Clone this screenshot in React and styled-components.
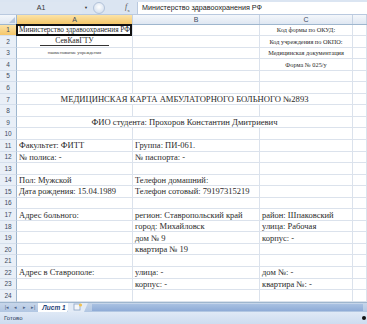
import React from "react";
import styled, { createGlobalStyle } from "styled-components";

const GlobalStyle = createGlobalStyle`
  html, body {
    margin: 0;
    padding: 0;
    background: #ffffff;
  }
`;

const COLS = [116, 127, 93, 14];
const ROW_H = 11.55;

const rows = [
  { n: 1, active: true, cells: [{ t: "Министерство здравоохранения РФ", kind: "selected" }, null, { t: "Код формы по ОКУД:", kind: "small" }] },
  { n: 2, cells: [{ t: "СевКавГТУ", kind: "org" }, null, { t: "Код учреждения по ОКПО:", kind: "small" }] },
  { n: 3, cells: [{ t: "наименование учреждения", kind: "tiny" }, null, { t: "Медицинская документация", kind: "small" }] },
  { n: 4, cells: [null, null, { t: "Форма № 025/у", kind: "small" }] },
  { n: 5, cells: [] },
  { n: 6, cells: [] },
  { n: 7, span: "МЕДИЦИНСКАЯ КАРТА АМБУЛАТОРНОГО БОЛЬНОГО №2893" },
  { n: 8, cells: [] },
  { n: 9, span: "ФИО студента: Прохоров Константин Дмитриевич" },
  { n: 10, cells: [] },
  { n: 11, cells: [{ t: "Факультет: ФИТТ" }, { t: "Группа: ПИ-061." }] },
  { n: 12, cells: [{ t: "№ полиса: -" }, { t: "№ паспорта: -" }] },
  { n: 13, cells: [] },
  { n: 14, cells: [{ t: "Пол: Мужской" }, { t: "Телефон домашний:" }] },
  { n: 15, cells: [{ t: "Дата рождения: 15.04.1989" }, { t: "Телефон сотовый: 79197315219" }] },
  { n: 16, cells: [] },
  { n: 17, cells: [{ t: "Адрес больного:" }, { t: "регион: Ставропольский край" }, { t: "район: Шпаковский" }] },
  { n: 18, cells: [null, { t: "город: Михайловск" }, { t: "улица: Рабочая" }] },
  { n: 19, cells: [null, { t: "дом № 9" }, { t: "корпус: -" }] },
  { n: 20, cells: [null, { t: "квартира № 19" }] },
  { n: 21, cells: [] },
  { n: 22, cells: [{ t: "Адрес в Ставрополе:" }, { t: "улица: -" }, { t: "дом №: -" }] },
  { n: 23, cells: [null, { t: "корпус: -" }, { t: "квартира №: -" }] },
  { n: 24, cells: [] },
];

const App = () => (
  <Window>
    <GlobalStyle />
    <FormulaBar>
      <NameBox>A1</NameBox>
      <DropArrow>▼</DropArrow>
      <Splitter />
      <RoundBtn />
      <Fx>
        <i>f</i>
        <sub>x</sub>
      </Fx>
      <FormulaInput>Министерство здравоохранения РФ</FormulaInput>
    </FormulaBar>

    <HeaderRow>
      <Corner>
        <svg width="8" height="8" viewBox="0 0 8 8">
          <path d="M7 1 L7 7 L1 7 Z" fill="#b7c6dc" />
        </svg>
      </Corner>
      {["A", "B", "C", ""].map((c, i) => (
        <ColHead key={i} $w={COLS[i]} $active={c === "A"}>
          {c}
        </ColHead>
      ))}
    </HeaderRow>

    <Sheet>
      {rows.map((r) => (
        <Row key={r.n}>
          <RowHead $active={r.active}>{r.n}</RowHead>
          {r.span ? (
            <>
              <SpanCell $w={COLS[0] + COLS[1] + COLS[2]}>{r.span}</SpanCell>
              <Cell $w={COLS[3]} />
            </>
          ) : (
            COLS.map((w, i) => {
              const c = r.cells[i];
              if (!c) return <Cell key={i} $w={w} />;
              if (c.kind === "selected")
                return (
                  <Cell key={i} $w={w}>
                    <Selected>{c.t}</Selected>
                  </Cell>
                );
              if (c.kind === "org")
                return (
                  <CenterCell key={i} $w={w}>
                    <OrgName>{c.t}</OrgName>
                  </CenterCell>
                );
              if (c.kind === "tiny")
                return (
                  <CenterCell key={i} $w={w}>
                    <Tiny>{c.t}</Tiny>
                  </CenterCell>
                );
              if (c.kind === "small")
                return (
                  <CenterCell key={i} $w={w}>
                    <Small>{c.t}</Small>
                  </CenterCell>
                );
              return (
                <Cell key={i} $w={w}>
                  <Text>{c.t}</Text>
                </Cell>
              );
            })
          )}
        </Row>
      ))}
    </Sheet>

    <TabBar>
      <NavButtons>
        <span>|◂</span>
        <span>◂</span>
        <span>▸</span>
        <span>▸|</span>
      </NavButtons>
      <SheetTab>Лист 1</SheetTab>
      <NewTab>
        <svg width="10" height="8" viewBox="0 0 10 8">
          <rect x="1" y="1" width="6" height="6" fill="#f3f6fb" stroke="#8aa2c4" strokeWidth="0.8" />
          <circle cx="7.5" cy="2" r="1.6" fill="#f2c14e" />
        </svg>
      </NewTab>
      <HScroll />
    </TabBar>

    <StatusBar>
      <span>Готово</span>
      <Dot />
    </StatusBar>
  </Window>
);

export default App;

const Window = styled.div`
  width: 367px;
  height: 324px;
  overflow: hidden;
  display: flex;
  flex-direction: column;
  background: #ffffff;
  font-family: "Liberation Sans", Arial, sans-serif;
`;

const FormulaBar = styled.div`
  height: 15px;
  flex: none;
  display: flex;
  align-items: center;
  background: #dbe5f2;
  border-bottom: 1px solid #b9c9df;
  box-sizing: border-box;
  padding-top: 1px;
`;

const NameBox = styled.div`
  width: 82px;
  height: 12px;
  background: #dde6f2;
  display: flex;
  align-items: center;
  justify-content: center;
  font-size: 7px;
  color: #333;
`;

const DropArrow = styled.div`
  width: 8px;
  font-size: 4px;
  color: #333;
  text-align: center;
`;

const Splitter = styled.div`
  width: 3px;
`;

const RoundBtn = styled.div`
  width: 12px;
  height: 12px;
  border-radius: 50%;
  background: radial-gradient(circle at 50% 40%, #ffffff, #c9d7ea);
  border: 1px solid #b3c3da;
  box-sizing: border-box;
  margin-right: 20px;
`;

const Fx = styled.div`
  width: 12px;
  font-family: "Liberation Serif", serif;
  font-size: 8px;
  color: #555;
  sub {
    font-size: 5px;
  }
`;

const FormulaInput = styled.div`
  flex: 1;
  height: 12px;
  background: #ffffff;
  border-left: 1px solid #b9c9df;
  display: flex;
  align-items: center;
  padding-left: 4px;
  font-size: 7.2px;
  color: #222;
  white-space: nowrap;
`;

const HeaderRow = styled.div`
  height: 9.5px;
  flex: none;
  display: flex;
  background: linear-gradient(#f4f7fb, #dfe7f2);
  border-bottom: 1px solid #9eb6ce;
  box-sizing: border-box;
`;

const Corner = styled.div`
  width: 17px;
  flex: none;
  display: flex;
  align-items: flex-end;
  justify-content: flex-end;
  border-right: 1px solid #9eb6ce;
  box-sizing: border-box;
  svg {
    display: block;
  }
`;

const ColHead = styled.div`
  width: ${(p) => p.$w}px;
  flex: none;
  box-sizing: border-box;
  border-right: 1px solid #c5d2e3;
  display: flex;
  align-items: center;
  justify-content: center;
  font-size: 7px;
  color: #3c4a60;
  background: ${(p) =>
    p.$active ? "linear-gradient(#fbe3a8, #f5c76a)" : "transparent"};
`;

const Sheet = styled.div`
  flex: none;
  display: flex;
  flex-direction: column;
`;

const Row = styled.div`
  height: ${ROW_H}px;
  display: flex;
  box-sizing: border-box;
`;

const RowHead = styled.div`
  width: 17px;
  flex: none;
  box-sizing: border-box;
  border-right: 1px solid #9eb6ce;
  border-bottom: 1px solid #d5dfec;
  display: flex;
  align-items: center;
  justify-content: center;
  font-size: 6.5px;
  color: #3c4a60;
  background: ${(p) =>
    p.$active ? "linear-gradient(#fbe3a8, #f5c76a)" : "#e9eff7"};
`;

const Cell = styled.div`
  width: ${(p) => p.$w}px;
  flex: none;
  box-sizing: border-box;
  border-right: 1px solid #dbe2ec;
  border-bottom: 1px solid #dbe2ec;
  position: relative;
  display: flex;
  align-items: center;
  overflow: visible;
  white-space: nowrap;
  font-family: "Liberation Serif", "Times New Roman", serif;
  font-size: 8.5px;
  color: #2a2a2a;
`;

const CenterCell = styled(Cell)`
  justify-content: center;
`;

const SpanCell = styled(Cell)`
  justify-content: center;
  font-size: 8.6px;
`;

const Text = styled.span`
  padding-left: 2px;
`;

const Selected = styled.div`
  position: absolute;
  left: -1px;
  top: -1px;
  right: 0;
  bottom: -1px;
  border: 2px solid #111;
  box-sizing: border-box;
  display: flex;
  align-items: center;
  padding-left: 1px;
  font-size: 7.3px;
  z-index: 1;
`;

const OrgName = styled.span`
  font-size: 7.6px;
  padding: 0 15px;
  border-bottom: 1px solid #333;
  line-height: 9px;
`;

const Tiny = styled.span`
  font-size: 4.7px;
  color: #333;
`;

const Small = styled.span`
  font-size: 6.3px;
`;

const TabBar = styled.div`
  flex: 1;
  display: flex;
  align-items: stretch;
  background: linear-gradient(#c7d6ea, #b1c6e2);
  border-top: 1px solid #9eb6ce;
  box-sizing: border-box;
`;

const NavButtons = styled.div`
  width: 36px;
  display: flex;
  align-items: center;
  justify-content: space-around;
  font-size: 5px;
  color: #4e6385;
  padding-left: 2px;
`;

const SheetTab = styled.div`
  width: 32px;
  background: #ffffff;
  display: flex;
  align-items: center;
  justify-content: center;
  font-size: 6.5px;
  font-style: italic;
  font-weight: bold;
  color: #1c3f78;
  border-right: 1px solid #8ea6c6;
  clip-path: polygon(0 0, 100% 0, 88% 100%, 0 100%);
`;

const NewTab = styled.div`
  width: 20px;
  display: flex;
  align-items: center;
  justify-content: center;
  background: #e3ebf6;
  clip-path: polygon(0 0, 100% 0, 80% 100%, 0 100%);
  margin-left: -3px;
`;

const HScroll = styled.div`
  flex: 1;
  margin: 1px 4px 1px 4px;
  background: linear-gradient(#a9c1e2, #8eabd6);
`;

const StatusBar = styled.div`
  height: 12px;
  flex: none;
  display: flex;
  align-items: center;
  justify-content: space-between;
  padding: 0 1px 0 4px;
  background: linear-gradient(#dfe9f6, #cddcf0);
  font-size: 6px;
  color: #2d3e5a;
`;

const Dot = styled.div`
  width: 4px;
  height: 4px;
  border-radius: 50%;
  background: #111;
`;
